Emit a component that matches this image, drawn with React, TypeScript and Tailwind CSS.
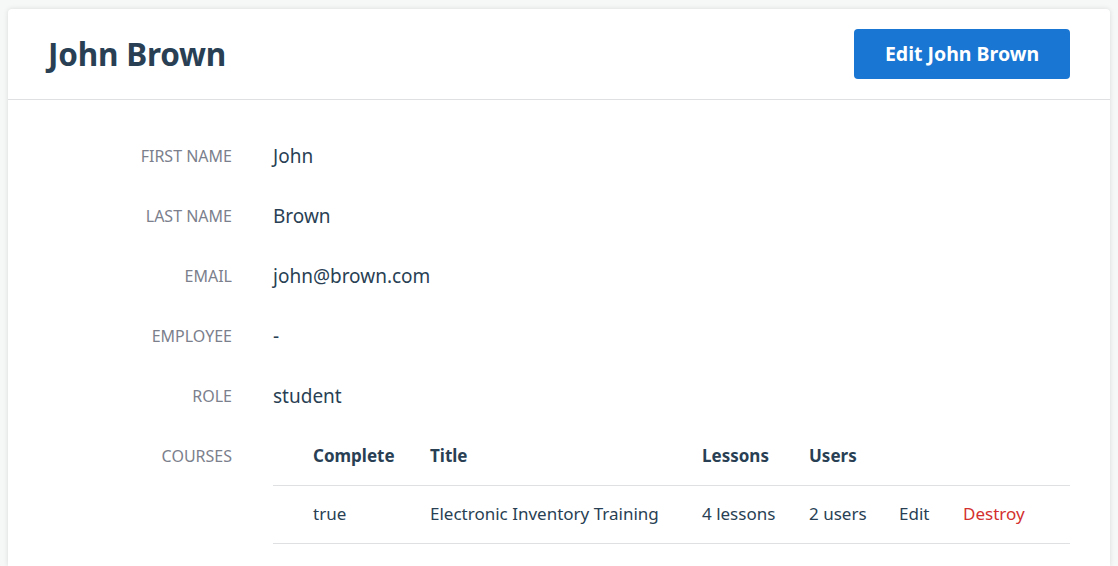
export default function App() {
  const fields = [
    { label: 'First name', value: 'John' },
    { label: 'Last name', value: 'Brown' },
    { label: 'Email', value: 'john@brown.com' },
    { label: 'Employee', value: '-' },
    { label: 'Role', value: 'student' },
  ]

  return (
    <div
      className="min-h-[566px] bg-[#f6f7f7] px-2 pt-[9px] text-[#293f54]"
      style={{ fontFamily: '"Noto Sans", "Open Sans", sans-serif' }}
    >
      <main className="min-h-[557px] rounded-t bg-white shadow-[0_0_5px_rgba(0,0,0,0.12)]">
        <header className="flex h-[91px] items-center justify-between border-b border-[#dfe0e1] px-10">
          <h1 className="text-[31.5px] font-bold tracking-[-0.2px]">John Brown</h1>
          <a className="flex h-[50px] w-[216px] items-center justify-center rounded bg-[#1976d2] text-[19.5px] font-bold text-white">
            Edit John Brown
          </a>
        </header>

        <section className="px-10 pt-[26px]">
          {fields.map(f => (
            <div key={f.label} className="flex h-[60px] items-center">
              <div className="w-[184px] text-right text-[16px] uppercase text-[#7b808c]">{f.label}</div>
              <div className="ml-[41px] text-[19px]">{f.value}</div>
            </div>
          ))}

          <div className="flex">
            <div className="flex h-[60px] w-[184px] items-center justify-end text-[16px] uppercase text-[#7b808c]">
              Courses
            </div>
            <table className="ml-[41px] flex-1 table-fixed border-collapse text-left text-[17px]">
              <colgroup>
                <col className="w-[157px]" />
                <col className="w-[272px]" />
                <col className="w-[107px]" />
                <col className="w-[90px]" />
                <col className="w-[64px]" />
                <col />
              </colgroup>
              <thead>
                <tr className="h-[59px] border-b border-[#dfe0e1]">
                  <th className="pl-10 font-bold">Complete</th>
                  <th className="font-bold">Title</th>
                  <th className="font-bold">Lessons</th>
                  <th className="font-bold">Users</th>
                  <th />
                  <th />
                </tr>
              </thead>
              <tbody>
                <tr className="h-[58px] border-b border-[#dfe0e1]">
                  <td className="pl-10">true</td>
                  <td className="whitespace-nowrap">Electronic Inventory Training</td>
                  <td>4 lessons</td>
                  <td>2 users</td>
                  <td>Edit</td>
                  <td className="text-[#d32f2f]">Destroy</td>
                </tr>
              </tbody>
            </table>
          </div>
        </section>
      </main>
    </div>
  )
}
